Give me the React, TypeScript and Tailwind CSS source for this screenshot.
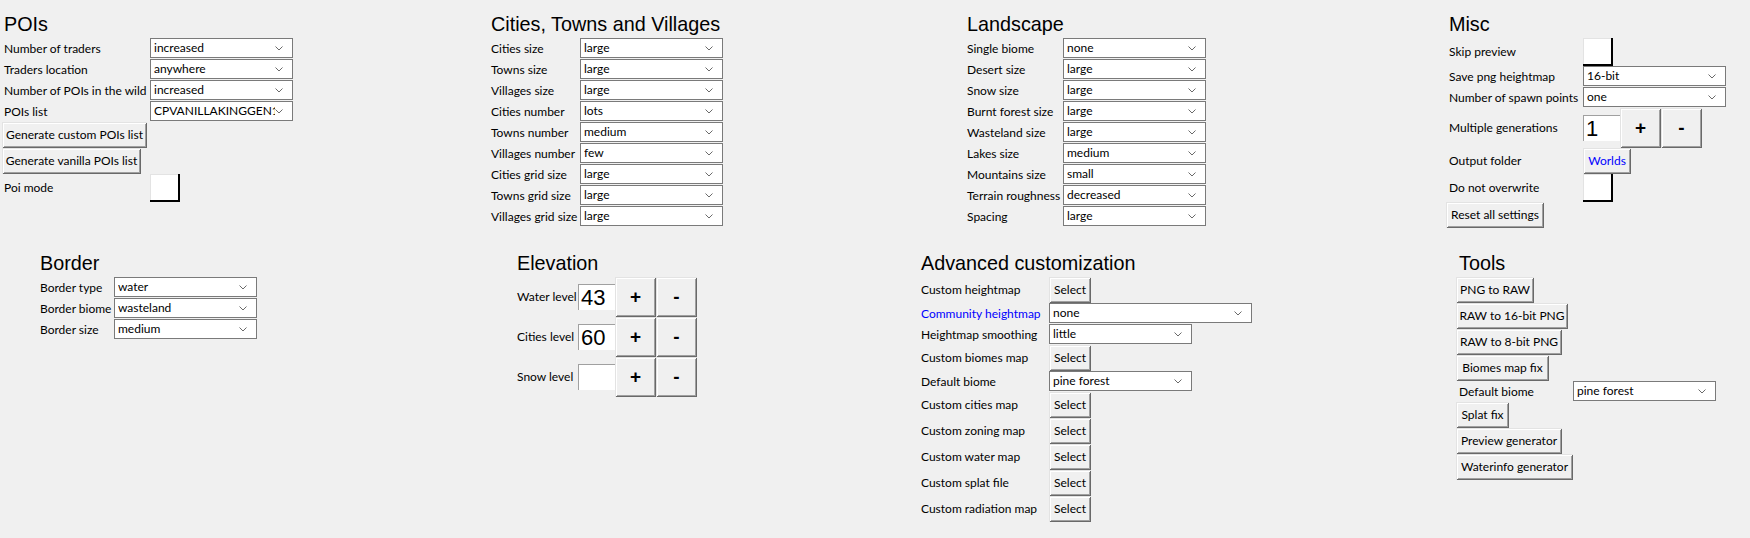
import React from "react";

const Chevron = () => (
  <svg width="8" height="5" viewBox="0 0 8 5" className="shrink-0">
    <polyline points="0.5,0.5 4,4 7.5,0.5" fill="none" stroke="#6a6a6a" strokeWidth="1" />
  </svg>
);

function Combo({ value, w = "w-[143px]" }: { value: string; w?: string }) {
  return (
    <div className={`${w} h-[20px] mb-[1px] bg-white border border-[#7a7a7a] flex items-center pl-[3px] pr-[9px] overflow-hidden`}>
      <span className="flex-1 min-w-0 whitespace-nowrap overflow-hidden text-black">{value}</span>
      <Chevron />
    </div>
  );
}

function Btn({ children, w, blue }: { children: React.ReactNode; w: string; blue?: boolean }) {
  return (
    <div
      className={`${w} h-[26px] bg-[#f0f0f0] flex items-center justify-center whitespace-nowrap shadow-[inset_1px_1px_0_#e3e3e3,inset_-1px_-1px_0_#696969,inset_2px_2px_0_#ffffff,inset_-2px_-2px_0_#a0a0a0] ${blue ? "text-[#0000ff]" : "text-black"}`}
    >
      {children}
    </div>
  );
}

function Check() {
  return <div className="w-[30px] h-[28px] bg-white shadow-[inset_-2px_-2px_0_#000000,inset_1px_1px_0_#e3e3e3]" />;
}

function Big({ children }: { children: React.ReactNode }) {
  return (
    <div className="w-[41px] h-[40px] bg-[#f0f0f0] flex items-center justify-center font-['Liberation_Sans',sans-serif] text-[19px] font-bold text-black shadow-[inset_1px_1px_0_#e3e3e3,inset_-1px_-1px_0_#696969,inset_2px_2px_0_#ffffff,inset_-2px_-2px_0_#a0a0a0]">
      {children}
    </div>
  );
}

function Entry({ value }: { value: string }) {
  return (
    <div className="w-[37px] h-[26px] bg-white flex items-center pl-[3px] font-['Liberation_Sans',sans-serif] text-[22px] text-black shadow-[inset_1px_1px_0_#a0a0a0]">
      {value}
    </div>
  );
}

function Title({ children, pl = "" }: { children: React.ReactNode; pl?: string }) {
  return (
    <div className={`h-[28px] leading-[28px] font-['Liberation_Sans',sans-serif] text-[19.8px] text-black whitespace-nowrap ${pl}`}>
      {children}
    </div>
  );
}

function Row({ label, lw, h = "h-[21px]", children, blue }: { label: string; lw: string; h?: string; children: React.ReactNode; blue?: boolean }) {
  return (
    <div className={`flex items-center ${h}`}>
      <div className={`${lw} shrink-0 whitespace-nowrap ${blue ? "text-[#0000ff]" : "text-black"}`}>{label}</div>
      {children}
    </div>
  );
}

export default function App() {
  return (
    <div className="w-[1750px] h-[538px] bg-[#f0f0f0] font-['Lato',sans-serif] text-[12px] text-black overflow-hidden">
      <div className="flex items-start pt-[10px]">
        {/* POIs */}
        <div className="ml-[2px] w-[488px] flex flex-col items-start">
          <Title pl="pl-[2px]">POIs</Title>
          <Row label="Number of traders" lw="w-[148px] pl-[2px]"><Combo value="increased" /></Row>
          <Row label="Traders location" lw="w-[148px] pl-[2px]"><Combo value="anywhere" /></Row>
          <Row label="Number of POIs in the wild" lw="w-[148px] pl-[2px]"><Combo value="increased" /></Row>
          <Row label="POIs list" lw="w-[148px] pl-[2px]"><Combo value="CPVANILLAKINGGEN13" /></Row>
          <Btn w="w-[145px]">Generate custom POIs list</Btn>
          <Btn w="w-[139px]">Generate vanilla POIs list</Btn>
          <Row label="Poi mode" lw="w-[148px] pl-[2px]" h="h-[28px]"><Check /></Row>
        </div>
        {/* Cities */}
        <div className="w-[476px] flex flex-col items-start">
          <Title pl="pl-[1px]">Cities, Towns and Villages</Title>
          <Row label="Cities size" lw="w-[90px] pl-[1px]"><Combo value="large" /></Row>
          <Row label="Towns size" lw="w-[90px] pl-[1px]"><Combo value="large" /></Row>
          <Row label="Villages size" lw="w-[90px] pl-[1px]"><Combo value="large" /></Row>
          <Row label="Cities number" lw="w-[90px] pl-[1px]"><Combo value="lots" /></Row>
          <Row label="Towns number" lw="w-[90px] pl-[1px]"><Combo value="medium" /></Row>
          <Row label="Villages number" lw="w-[90px] pl-[1px]"><Combo value="few" /></Row>
          <Row label="Cities grid size" lw="w-[90px] pl-[1px]"><Combo value="large" /></Row>
          <Row label="Towns grid size" lw="w-[90px] pl-[1px]"><Combo value="large" /></Row>
          <Row label="Villages grid size" lw="w-[90px] pl-[1px]"><Combo value="large" /></Row>
        </div>
        {/* Landscape */}
        <div className="w-[480px] flex flex-col items-start">
          <Title pl="pl-[1px]">Landscape</Title>
          <Row label="Single biome" lw="w-[97px] pl-[1px]"><Combo value="none" /></Row>
          <Row label="Desert size" lw="w-[97px] pl-[1px]"><Combo value="large" /></Row>
          <Row label="Snow size" lw="w-[97px] pl-[1px]"><Combo value="large" /></Row>
          <Row label="Burnt forest size" lw="w-[97px] pl-[1px]"><Combo value="large" /></Row>
          <Row label="Wasteland size" lw="w-[97px] pl-[1px]"><Combo value="large" /></Row>
          <Row label="Lakes size" lw="w-[97px] pl-[1px]"><Combo value="medium" /></Row>
          <Row label="Mountains size" lw="w-[97px] pl-[1px]"><Combo value="small" /></Row>
          <Row label="Terrain roughness" lw="w-[97px] pl-[1px]"><Combo value="decreased" /></Row>
          <Row label="Spacing" lw="w-[97px] pl-[1px]"><Combo value="large" /></Row>
        </div>
        {/* Misc */}
        <div className="flex-1 flex flex-col items-start">
          <Title pl="pl-[3px]">Misc</Title>
          <Row label="Skip preview" lw="w-[137px] pl-[3px]" h="h-[28px]"><Check /></Row>
          <Row label="Save png heightmap" lw="w-[137px] pl-[3px]"><Combo value="16-bit" /></Row>
          <Row label="Number of spawn points" lw="w-[137px] pl-[3px]"><Combo value="one" /></Row>
          <Row label="Multiple generations" lw="w-[137px] pl-[3px]" h="h-[40px]">
            <Entry value="1" />
            <Big>+</Big>
            <Big>-</Big>
          </Row>
          <Row label="Output folder" lw="w-[137px] pl-[3px]" h="h-[26px]"><Btn w="w-[48px]" blue>Worlds</Btn></Row>
          <Row label="Do not overwrite" lw="w-[137px] pl-[3px]" h="h-[28px]"><Check /></Row>
          <Btn w="w-[98px]">Reset all settings</Btn>
        </div>
      </div>

      <div className="flex items-start mt-[21px] pl-[40px]">
        {/* Border */}
        <div className="w-[477px] flex flex-col items-start">
          <Title>Border</Title>
          <Row label="Border type" lw="w-[74px]"><Combo value="water" /></Row>
          <Row label="Border biome" lw="w-[74px]"><Combo value="wasteland" /></Row>
          <Row label="Border size" lw="w-[74px]"><Combo value="medium" /></Row>
        </div>
        {/* Elevation */}
        <div className="w-[404px] flex flex-col items-start">
          <Title>Elevation</Title>
          <Row label="Water level" lw="w-[61px]" h="h-[40px]"><Entry value="43" /><Big>+</Big><Big>-</Big></Row>
          <Row label="Cities level" lw="w-[61px]" h="h-[40px]"><Entry value="60" /><Big>+</Big><Big>-</Big></Row>
          <Row label="Snow level" lw="w-[61px]" h="h-[40px]"><Entry value="" /><Big>+</Big><Big>-</Big></Row>
        </div>
        {/* Advanced */}
        <div className="w-[535px] flex flex-col items-start">
          <Title>Advanced customization</Title>
          <Row label="Custom heightmap" lw="w-[128px]" h="h-[26px]"><Btn w="w-[42px]">Select</Btn></Row>
          <Row label="Community heightmap" lw="w-[128px]" blue><Combo value="none" w="w-[203px]" /></Row>
          <Row label="Heightmap smoothing" lw="w-[128px]"><Combo value="little" /></Row>
          <Row label="Custom biomes map" lw="w-[128px]" h="h-[26px]"><Btn w="w-[42px]">Select</Btn></Row>
          <Row label="Default biome" lw="w-[128px]"><Combo value="pine forest" /></Row>
          <Row label="Custom cities map" lw="w-[128px]" h="h-[26px]"><Btn w="w-[42px]">Select</Btn></Row>
          <Row label="Custom zoning map" lw="w-[128px]" h="h-[26px]"><Btn w="w-[42px]">Select</Btn></Row>
          <Row label="Custom water map" lw="w-[128px]" h="h-[26px]"><Btn w="w-[42px]">Select</Btn></Row>
          <Row label="Custom splat file" lw="w-[128px]" h="h-[26px]"><Btn w="w-[42px]">Select</Btn></Row>
          <Row label="Custom radiation map" lw="w-[128px]" h="h-[26px]"><Btn w="w-[42px]">Select</Btn></Row>
        </div>
        {/* Tools */}
        <div className="flex-1 flex flex-col items-start">
          <Title pl="pl-[3px]">Tools</Title>
          <Btn w="w-[78px]">PNG to RAW</Btn>
          <Btn w="w-[112px]">RAW to 16-bit PNG</Btn>
          <Btn w="w-[106px]">RAW to 8-bit PNG</Btn>
          <Btn w="w-[93px]">Biomes map fix</Btn>
          <Row label="Default biome" lw="w-[117px] pl-[3px]"><Combo value="pine forest" /></Row>
          <Btn w="w-[53px]">Splat fix</Btn>
          <Btn w="w-[106px]">Preview generator</Btn>
          <Btn w="w-[117px]">Waterinfo generator</Btn>
        </div>
      </div>
    </div>
  );
}
